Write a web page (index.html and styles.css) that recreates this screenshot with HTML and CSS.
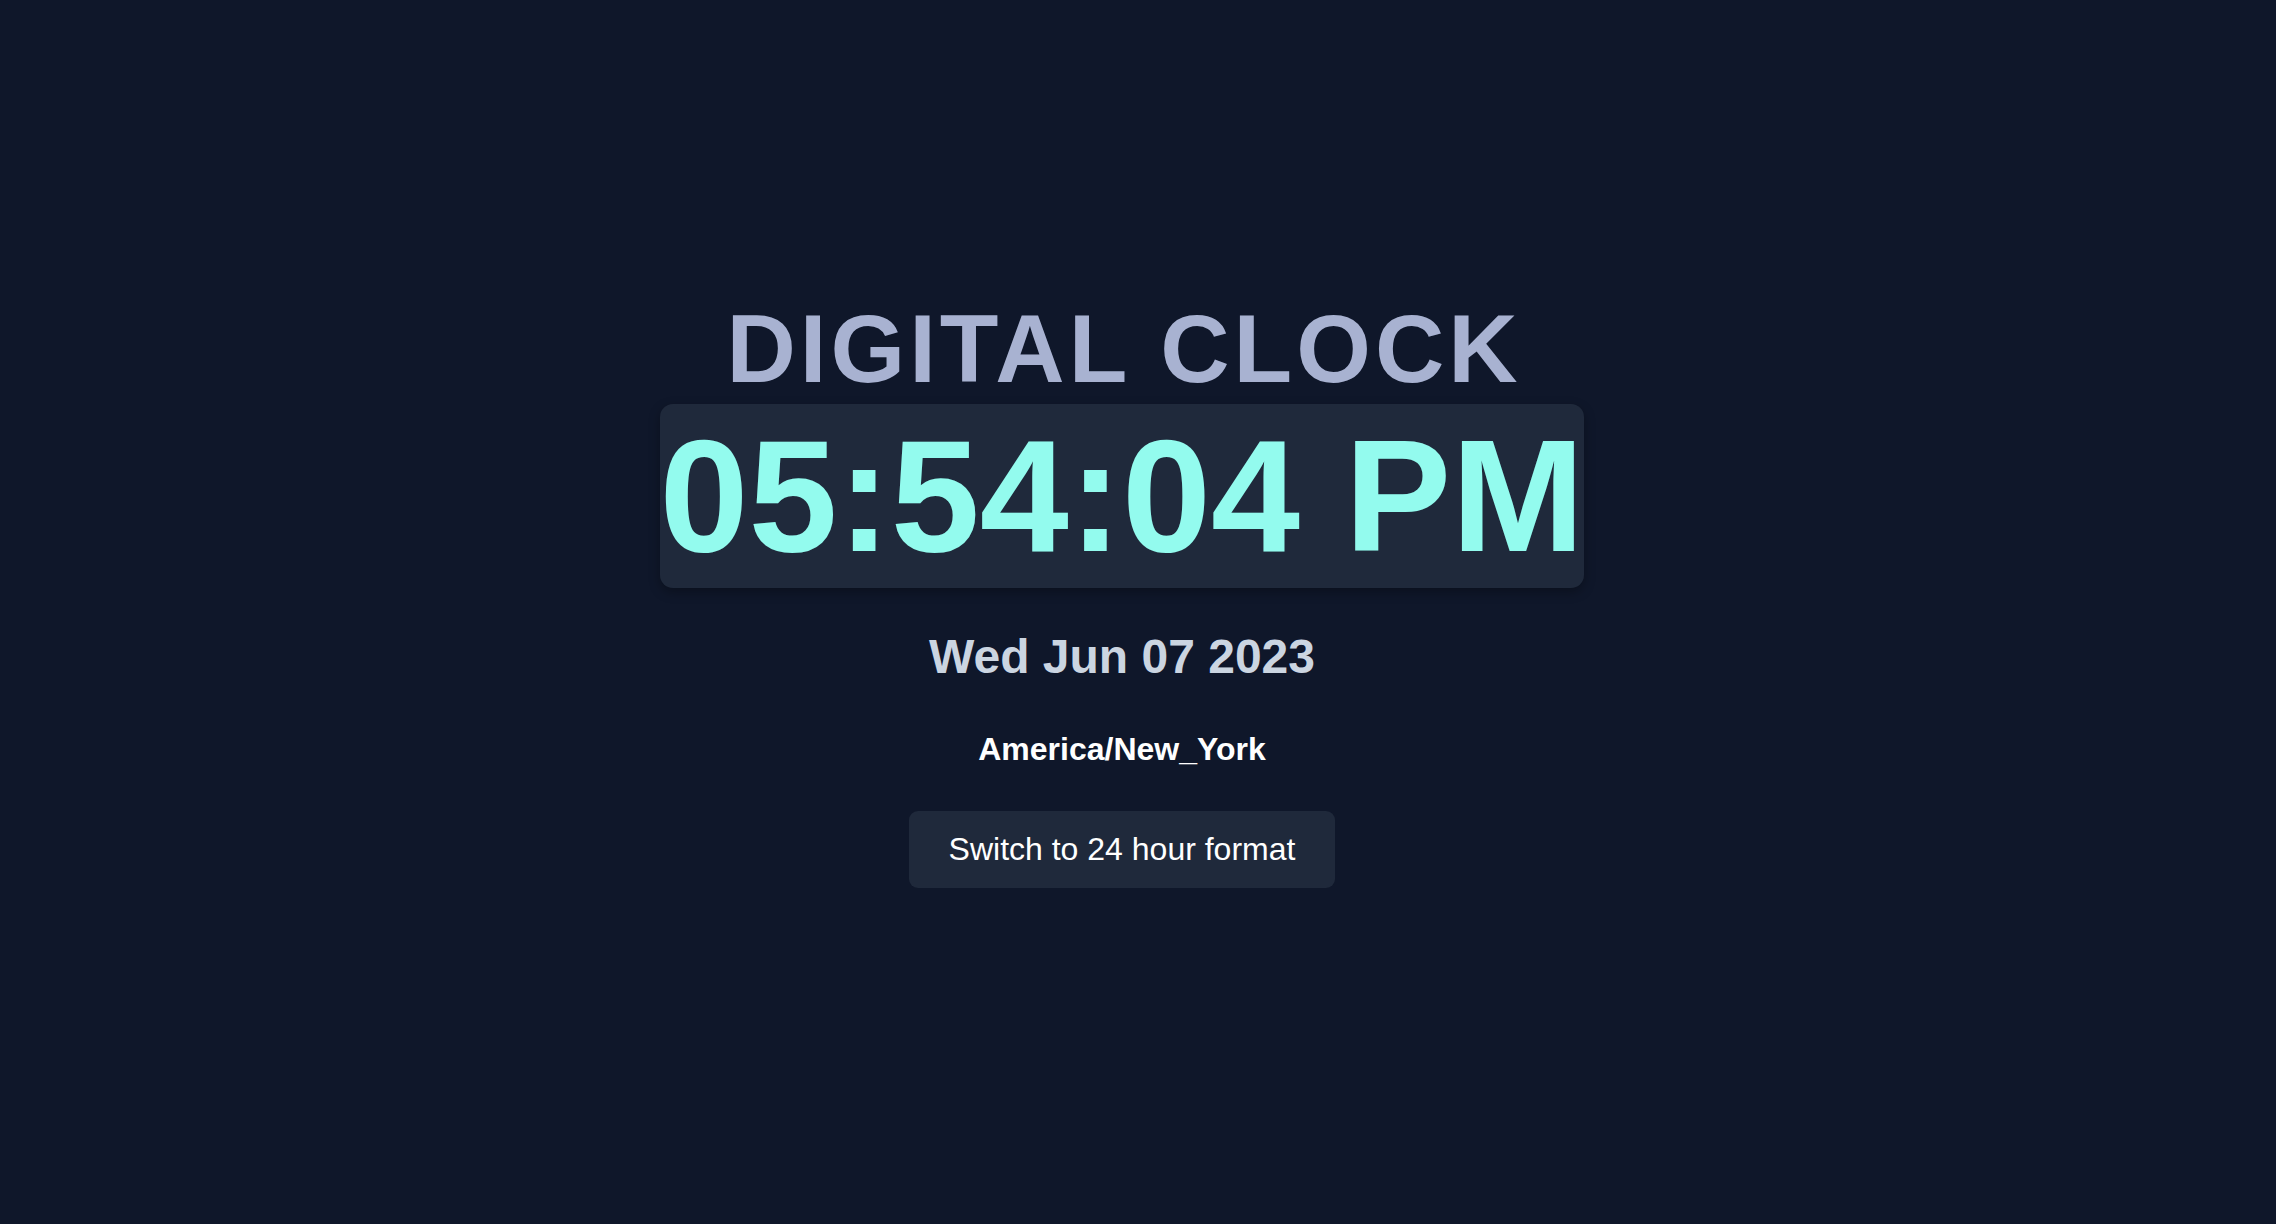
FILE: index.html
```html
<!DOCTYPE html>
<html lang="en">
<head>
<meta charset="utf-8">
<title>Digital Clock</title>
<link rel="stylesheet" href="styles.css">
</head>
<body>
<main class="app">
  <h1 class="title">DIGITAL CLOCK</h1>
  <div class="clock">05:54:04 PM</div>
  <h2 class="date">Wed Jun 07 2023</h2>
  <p class="zone">America/New_York</p>
  <button class="toggle" type="button">Switch to 24 hour format</button>
</main>
</body>
</html>
```
FILE: styles.css
```css
html, body {
  margin: 0;
  padding: 0;
  background: #0f172a;
  min-height: 100%;
}

body {
  font-family: "Liberation Sans", Arial, sans-serif;
  height: 1224px;
}

.app {
  display: flex;
  flex-direction: column;
  align-items: center;
  padding: 294px 32px 0 0;
}

.title {
  margin: 0 0 0 4px;
  font-size: 96px;
  font-weight: 700;
  letter-spacing: 4px;
  color: #a8b2d1;
  line-height: normal;
}

.clock {
  font-size: 160px;
  font-weight: 700;
  color: #93fbee;
  background: #1f293b;
  border-radius: 13px;
  line-height: normal;
  box-shadow: 0 4px 12px rgba(0, 0, 0, 0.3);
}

.date {
  margin: 41px 0 0;
  font-size: 48px;
  font-weight: 700;
  color: #cbd5e1;
  line-height: normal;
}

.zone {
  margin: 47px 0 0;
  font-size: 32px;
  font-weight: 700;
  color: #ffffff;
  line-height: normal;
}

.toggle {
  margin-top: 43px;
  padding: 20px 40px;
  font-family: "Liberation Sans", Arial, sans-serif;
  font-size: 32px;
  line-height: normal;
  color: #ffffff;
  background: #1f293b;
  border: none;
  border-radius: 9px;
  cursor: pointer;
}
```
